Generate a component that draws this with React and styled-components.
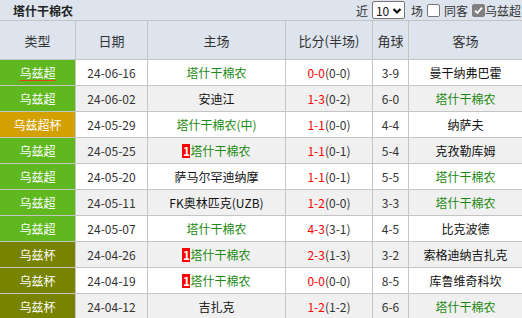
import React from 'react';
import styled, {createGlobalStyle} from 'styled-components';

const GlobalStyle = createGlobalStyle`
    body {
        margin: 0;
        background: #fff;
        font-family: "Noto Sans CJK SC", "Noto Sans", sans-serif;
    }
`;

const matches = [
    {type: '乌兹超', kind: 'league', date: '24-06-16', home: '塔什干棉农', homeOwn: true, score: '0-0', half: '0-0', corner: '3-9', away: '曼干纳弗巴霍', underline: true},
    {type: '乌兹超', kind: 'league', date: '24-06-02', home: '安迪江', score: '1-3', half: '0-2', corner: '6-0', away: '塔什干棉农', awayOwn: true},
    {type: '乌兹超杯', kind: 'supercup', date: '24-05-29', home: '塔什干棉农(中)', homeOwn: true, score: '1-1', half: '0-0', corner: '4-4', away: '纳萨夫'},
    {type: '乌兹超', kind: 'league', date: '24-05-25', home: '塔什干棉农', homeOwn: true, red: 1, score: '1-1', half: '0-1', corner: '5-4', away: '克孜勒库姆'},
    {type: '乌兹超', kind: 'league', date: '24-05-20', home: '萨马尔罕迪纳摩', score: '1-1', half: '0-1', corner: '5-5', away: '塔什干棉农', awayOwn: true},
    {type: '乌兹超', kind: 'league', date: '24-05-11', home: 'FK奥林匹克(UZB)', score: '1-2', half: '0-0', corner: '3-3', away: '塔什干棉农', awayOwn: true},
    {type: '乌兹超', kind: 'league', date: '24-05-07', home: '塔什干棉农', homeOwn: true, score: '4-3', half: '3-1', corner: '4-5', away: '比克波德'},
    {type: '乌兹杯', kind: 'cup', date: '24-04-26', home: '塔什干棉农', homeOwn: true, red: 1, score: '2-3', half: '1-3', corner: '3-2', away: '索格迪纳吉扎克'},
    {type: '乌兹杯', kind: 'cup', date: '24-04-19', home: '塔什干棉农', homeOwn: true, red: 1, score: '0-0', half: '0-0', corner: '8-5', away: '库鲁维奇科坎'},
    {type: '乌兹杯', kind: 'cup', date: '24-04-12', home: '吉扎克', score: '1-2', half: '1-2', corner: '6-6', away: '塔什干棉农', awayOwn: true},
];

const kindColors = {
    league: '#60b81f',
    supercup: '#d3a000',
    cup: '#788400',
};

function App() {
    return (
        <Page>
            <GlobalStyle/>
            <TitleBar>
                <Title>塔什干棉农</Title>
                <Filters>
                    <Label>近</Label>
                    <FakeSelect>
                        <span>10</span>
                        <svg width="10" height="8" viewBox="0 0 10 8">
                            <path d="M1.5 2 L5 5.5 L8.5 2" fill="none" stroke="#111" strokeWidth="2.2"/>
                        </svg>
                    </FakeSelect>
                    <Label $gap={6}>场</Label>
                    <Check/>
                    <Label>同客</Label>
                    <Check checked>
                        <svg width="11" height="11" viewBox="0 0 11 11">
                            <path d="M2 5.6 L4.4 8 L9 2.6" fill="none" stroke="#fff" strokeWidth="1.8"/>
                        </svg>
                    </Check>
                    <Label $gap={0}>乌兹超</Label>
                </Filters>
            </TitleBar>
            <HeaderRow>
                <HeadCell>类型</HeadCell>
                <HeadCell>日期</HeadCell>
                <HeadCell>主场</HeadCell>
                <HeadCell>比分(半场)</HeadCell>
                <HeadCell>角球</HeadCell>
                <HeadCell>客场</HeadCell>
            </HeaderRow>
            {matches.map((m, i) => (
                <Row key={m.date} $alt={i % 2 === 1}>
                    <TypeCell $bg={kindColors[m.kind]}>
                        <TypeText $underline={m.underline}>{m.type}</TypeText>
                    </TypeCell>
                    <Cell>{m.date}</Cell>
                    <Cell>
                        {m.red ? <RedCard>{m.red}</RedCard> : null}
                        <Team $own={m.homeOwn}>{m.home}</Team>
                    </Cell>
                    <Cell>
                        <Score>{m.score}</Score>({m.half})
                    </Cell>
                    <Cell>{m.corner}</Cell>
                    <Cell>
                        <Team $own={m.awayOwn}>{m.away}</Team>
                    </Cell>
                </Row>
            ))}
        </Page>
    );
}

export default App;

const cols = '76px 72px 138px 87px 36px 1fr';

const Page = styled.div`
    width: 522px;
    height: 318px;
    overflow: hidden;
`;

const TitleBar = styled.div`
    height: 20px;
    border-bottom: 1px solid #c4c4c4;
    background: #dde4ee;
    display: flex;
    align-items: center;
    justify-content: space-between;
    padding-left: 13px;
    white-space: nowrap;
`;

const Title = styled.div`
    font-size: 12px;
    font-weight: bold;
    color: #222;
`;

const Filters = styled.div`
    display: flex;
    align-items: center;
    font-size: 12px;
    color: #333;
    margin-right: 1px;
`;

const Label = styled.span`
    margin-left: ${p => (p.$gap ?? 4)}px;
`;

const FakeSelect = styled.div`
    width: 31px;
    height: 16px;
    margin-left: 4px;
    border: 1px solid #767676;
    border-radius: 2px;
    background: #fff;
    display: flex;
    align-items: center;
    justify-content: space-between;
    padding: 0 2px 0 3px;
    box-sizing: border-box;
    width: 33px;
    height: 18px;
    font-size: 12px;
    color: #111;

    svg {
        margin-top: 1px;
    }
`;

const Check = styled.div`
    width: 11px;
    height: 11px;
    border: 1px solid ${p => (p.checked ? '#808080' : '#767676')};
    border-radius: 2px;
    background: ${p => (p.checked ? '#808080' : '#fff')};
    margin-left: 4px;
    display: flex;
    align-items: center;
    justify-content: center;
`;

const gridRow = `
    display: grid;
    grid-template-columns: ${cols};
`;

const HeaderRow = styled.div`
    ${gridRow};
    height: 39px;
    background: #dde4ee;
`;

const HeadCell = styled.div`
    border-right: 1px solid #c4c4c4;
    border-bottom: 1px solid #c4c4c4;
    display: flex;
    align-items: center;
    justify-content: center;
    font-size: 13px;
    color: #333;

    &:last-child {
        border-right: none;
    }
`;

const Row = styled.div`
    ${gridRow};
    height: 26px;
    background: ${p => (p.$alt ? '#f0f0f0' : '#fff')};
`;

const Cell = styled.div`
    border-right: 1px solid #c4c4c4;
    border-bottom: 1px solid #c4c4c4;
    display: flex;
    align-items: center;
    justify-content: center;
    font-size: 12px;
    color: #333;
    white-space: nowrap;
    overflow: hidden;

    &:last-child {
        border-right: none;
    }
`;

const TypeCell = styled(Cell)`
    background: ${p => p.$bg};
    color: #fff;
`;

const TypeText = styled.span`
    text-decoration: ${p => (p.$underline ? 'underline' : 'none')};
    text-decoration-color: #e8401a;
    text-underline-offset: 2px;
`;

const Team = styled.span`
    color: ${p => (p.$own ? '#1c8a12' : '#111')};
`;

const Score = styled.span`
    color: #ff0000;
`;

const RedCard = styled.span`
    display: inline-flex;
    align-items: center;
    justify-content: center;
    width: 8px;
    height: 14px;
    background: #ff0000;
    color: #fff;
    font-weight: bold;
    font-size: 12px;
    line-height: 14px;
`;
